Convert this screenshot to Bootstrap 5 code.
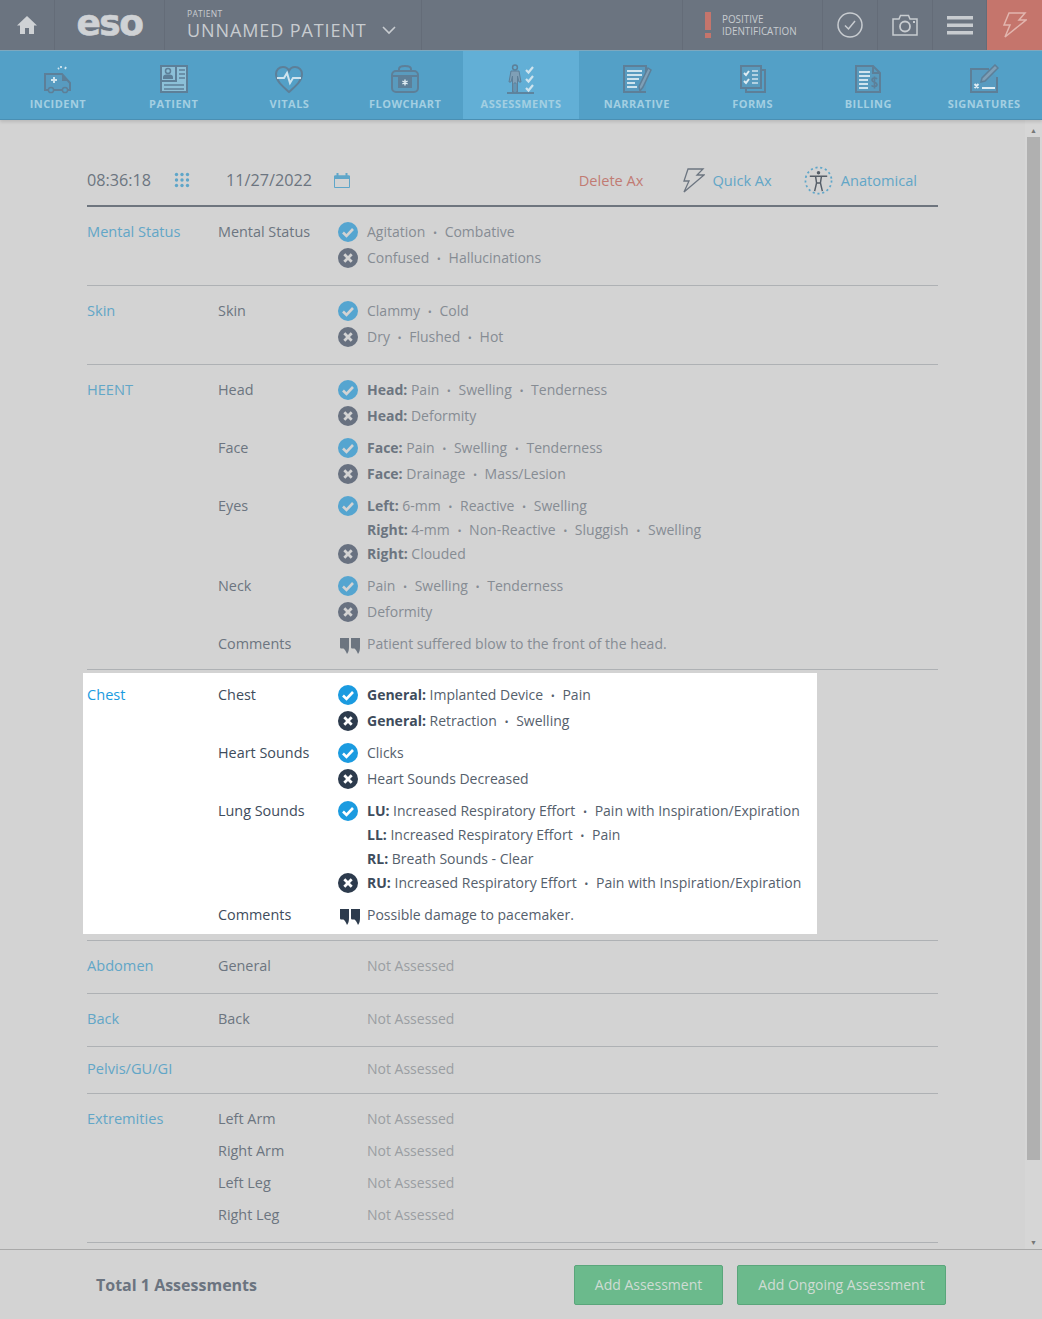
<!DOCTYPE html>
<html lang="en"><head><meta charset="utf-8"><title>Assessments</title>
<link href="https://cdn.jsdelivr.net/npm/bootstrap@5.3.0/dist/css/bootstrap.min.css" rel="stylesheet">
<style>
html,body{height:100%;overflow:hidden}
body{font-family:"Open Sans","Noto Sans",sans-serif;background:#d3d3d3;color:#6c7580;font-size:14px}
.app{height:1319px}
.topbar{height:51px;background:#6b7480;border-bottom:1px solid #7fa9bf;color:#c8ccd0;flex:none}
.tb-cell{border-right:1px solid #646c78;height:50px}
.tb-home{width:55px}.tb-logo{width:110px}
.logo-txt{font:700 36px/1 "DejaVu Sans",sans-serif;letter-spacing:-1.5px;color:#cfd2d5;margin-top:-4px;-webkit-text-stroke:.6px #cfd2d5}
.tb-patient{width:257px;padding-left:22px}
.pt-small{font-size:8.5px;line-height:10px;letter-spacing:.3px;margin-top:9px}
.pt-name{font-size:18px;line-height:22px;letter-spacing:.9px}
.chev{margin-left:15px}
.tb-spring{border-right:1px solid #646c78}
.tb-pos{width:140px;padding-left:22px}
.pos-txt{font-size:9.900px;line-height:12px;margin-left:11px}
.tb-ic{width:55px}
.tb-ic-n{width:54px}
.tb-flash{width:55px;background:#c5756c;border-right:0}
.mainnav{height:69px;background:#53a0c7;border-bottom:1px solid #4a8fb3;flex:none;box-shadow:0 2px 3px rgba(0,0,0,.12);position:relative;z-index:2}
.nav-it{width:115.8px;color:#a3cfe2;font-size:11px;font-weight:700;letter-spacing:.45px;padding-top:13px;line-height:15px}
.nav-it svg{display:block;margin-bottom:2px}
.nav-on{background:#62afd6}
.mid{min-height:0}
.scroller{min-width:0;overflow:hidden;padding:46px 87px 0 87px}
.sbar{width:17px;flex:none;background:#d6d6d6;padding:4px 2px 0 2px}
.sb-arrow{height:13px;color:#777;font-size:7px;line-height:13px;text-align:center}
.sb-thumb{height:1023px;background:#b0b0b0}
.hdr{height:41px;border-bottom:2px solid #6e757e;padding-bottom:11px;font-size:16.200px;width:851px}
.hdr-time{width:87px}.hdr-date{margin-left:36px;margin-right:22px}
.hdr-link{color:#62a6c7;font-size:14.600px;margin-top:2px}
.hdr-del{color:#c17b73;font-size:14.600px;margin-top:2px;margin-left:auto;margin-right:40px}
.hdr-q{margin-left:7px;margin-right:32px}
.hdr-a{margin-left:8px;margin-right:21px}
.sect{width:851px;padding:13px 0;border-bottom:1px solid #aeb1b4}
.rows{display:flex;flex-direction:column;gap:6px}
.arow{display:flex}
.sect-name{width:131px;flex:none;color:#62a6c7;line-height:22px;font-size:14.600px}
.lab{width:120px;flex:none;line-height:24px;color:#6c7580;font-size:14.400px}
.grp{display:flex;min-height:26px}
.grp-ic{width:29px;flex:none;height:24px;display:flex;align-items:center}
.qmark{margin-left:2px;margin-top:4px}
.ln{line-height:24px;color:#868c93}
.ln b{font-weight:700;color:#6c7580}
.sep{margin:0 7.600px;font-size:11px;line-height:1}
.grp-c{min-height:24px}
.na{color:#9a9ea2;line-height:24px;min-height:26px;margin-left:29px}
.sect-chest{padding:0 0 6px 0}
.hilite{width:fit-content;background:#fff;margin:3px 0 0 -4px;padding:10px 16px 7px 4px}
.hilite .sect-name{color:#1b9be0}
.hilite .lab{color:#3e4c5c}
.hilite .ln{color:#55606c}
.hilite .ln b{color:#3e4c5c}
.sect-pelvis{padding:10px 0}
.foot{height:70px;flex:none;border-top:1px solid #a9a9a9;padding:15px 96px 0 96px;background:#d3d3d3}
.foot-total{font-size:16px;font-weight:700;color:#6b7480}
.foot-btn{height:40px;background:#6bba8c;border:1px solid #5aa67b;color:#cfdcd4;font-size:14px;padding:0 0 2px;border-radius:2px;--bs-btn-hover-bg:#6bba8c;width:149px}
.foot-btn2{margin-left:14px;width:209px}
.oki{color:#55a5d0;--ic:#d3d3d3}.noi{color:#687180;--ic:#d3d3d3}.qti{color:#6c7580}
.okw{color:#1b9be0;--ic:#fff}.now{color:#2d3b4d;--ic:#fff}.qtw{color:#2d3b4d}
</style></head><body>
<svg width="0" height="0" class="position-absolute">
<symbol id="ok" viewBox="0 0 20 20"><circle cx="10" cy="10" r="10" fill="currentColor"/><path d="M5 10.500l3.500 3.500L15 7" fill="none" stroke="var(--ic,#d3d3d3)" stroke-width="2.600"/></symbol>
<symbol id="no" viewBox="0 0 20 20"><circle cx="10" cy="10" r="10" fill="currentColor"/><path d="M6.300 6.300l7.400 7.400M13.700 6.300l-7.400 7.400" fill="none" stroke="var(--ic,#d3d3d3)" stroke-width="2.800"/></symbol>
<symbol id="qt" viewBox="0 0 20 16"><path d="M0 0h9v9c0 3-.5 5-2 7-1-2.500-2-4.500-3.500-5.500h-2C.5 10.500 0 10 0 9zM11 0h9v9c0 3-.5 5-2 7-1-2.500-2-4.500-3.500-5.500h-2c-1 0-1.500-.5-1.500-1.500z" fill="currentColor"/></symbol>
</svg>
<div class="app d-flex flex-column">
 <header class="topbar d-flex">
  <div class="tb-cell tb-home d-flex align-items-center justify-content-center">
   <svg width="22" height="20" viewBox="0 0 22 20"><path d="M11 1L1 10.500h3V19h5v-6h4v6h5v-8.500h3z" fill="#cfd2d5"/></svg></div>
  <div class="tb-cell tb-logo d-flex align-items-center justify-content-center"><span class="logo-txt">eso</span></div>
  <div class="tb-cell tb-patient"><div class="pt-small">PATIENT</div>
   <div class="pt-name d-flex align-items-center">UNNAMED PATIENT
   <svg class="chev" width="14" height="9" viewBox="0 0 14 9"><path d="M1 1l6 6 6-6" fill="none" stroke="#c8ccd0" stroke-width="1.600"/></svg></div></div>
  <div class="tb-cell tb-spring flex-grow-1"></div>
  <div class="tb-cell tb-pos d-flex align-items-center">
   <svg width="6" height="26" viewBox="0 0 6 26"><path d="M0 0h6v18H0zM0 21h6v5H0z" fill="#c5756c"/></svg>
   <div class="pos-txt">POSITIVE<br>IDENTIFICATION</div></div>
  <div class="tb-cell tb-ic d-flex align-items-center justify-content-center">
   <svg width="26" height="26" viewBox="0 0 26 26"><circle cx="13" cy="13" r="12" fill="none" stroke="#c8ccd0" stroke-width="1.500"/><path d="M8 13.500l3.500 3.500L18 9" fill="none" stroke="#c8ccd0" stroke-width="1.500"/></svg></div>
  <div class="tb-cell tb-ic d-flex align-items-center justify-content-center">
   <svg width="26" height="22" viewBox="0 0 26 22"><path d="M1 5h6l1.500-3.500h8L18 5h7v16H1z" fill="none" stroke="#c8ccd0" stroke-width="1.500"/><circle cx="13" cy="12.500" r="5" fill="none" stroke="#c8ccd0" stroke-width="1.800"/><rect x="21" y="7" width="2" height="2" fill="#c8ccd0"/></svg></div>
  <div class="tb-cell tb-ic-n d-flex align-items-center justify-content-center">
   <svg width="26" height="19" viewBox="0 0 26 19"><path d="M0 0h26v3.500H0zM0 7.500h26V11H0zM0 15h26v3.500H0z" fill="#c8ccd0"/></svg></div>
  <div class="tb-cell tb-flash d-flex align-items-center justify-content-center">
   <svg width="24" height="26" viewBox="0 0 24 26"><path d="M6 1h16l-6 7h7L2 25l5-12H1z" fill="none" stroke="#e2b5ae" stroke-width="1.500"/></svg></div>
 </header>
 <nav class="mainnav d-flex">
  <div class="nav-it d-flex flex-column align-items-center"><svg width="30" height="30" viewBox="0 0 30 30"><path d="M2 10h17l8 9v7H2z" fill="#6592b0" fill-opacity=".3" stroke="#5d7f98" stroke-width="2"/><path d="M19 17v-6l6 6z" fill="#5d7f98"/><circle cx="8" cy="26" r="2.600" fill="#53a0c7" stroke="#5d7f98" stroke-width="1.500"/><circle cx="22" cy="26" r="2.600" fill="#53a0c7" stroke="#5d7f98" stroke-width="1.500"/><path d="M11 13v6M8 16h6" stroke="#cfe4ee" stroke-width="2"/><path d="M15 5l1-1M18 4l0-2M22 5l1-2" stroke="#cfe4ee" stroke-width="1.800"/></svg>INCIDENT</div>
  <div class="nav-it d-flex flex-column align-items-center"><svg width="30" height="30" viewBox="0 0 30 30"><rect x="2" y="2" width="26" height="26" fill="#8cc0d8" stroke="#5d7f98" stroke-width="2"/><circle cx="9" cy="7" r="2.500" fill="none" stroke="#5d7f98" stroke-width="1.500"/><path d="M4 15v-2c0-2 2-2.500 5-2.500s5 .5 5 2.500v2z" fill="#5d7f98"/><path d="M3 16h13V3h2v15H3z" fill="#5d7f98"/><path d="M20 6h6M20 10h6M20 14h6M5 21h20M5 25h20" stroke="#5d7f98" stroke-width="1.500"/></svg>PATIENT</div>
  <div class="nav-it d-flex flex-column align-items-center"><svg width="30" height="30" viewBox="0 0 30 30"><path d="M15 28C8 22 2 17 2 10c0-4 3-7 7-7 3 0 5 1.500 6 4 1-2.500 3-4 6-4 4 0 7 3 7 7 0 7-6 12-13 18z" fill="none" stroke="#5d7f98" stroke-width="2"/><path d="M3 14h7l3-5 3 10 3-5h8" fill="none" stroke="#cfe4ee" stroke-width="2"/></svg>VITALS</div>
  <div class="nav-it d-flex flex-column align-items-center"><svg width="30" height="30" viewBox="0 0 30 30"><path d="M9 7V5c0-2 2-3 6-3s6 1 6 3v2" fill="none" stroke="#5d7f98" stroke-width="2"/><rect x="2" y="7" width="26" height="21" rx="4" fill="#6592b0" fill-opacity=".35" stroke="#5d7f98" stroke-width="2"/><path d="M2 12h26" stroke="#5d7f98" stroke-width="2"/><rect x="8" y="13" width="14" height="11" fill="#5d7f98"/><path d="M15 15.500v6M12.400 17l5.200 3M17.600 17l-5.200 3" stroke="#e0edf3" stroke-width="1.400"/></svg>FLOWCHART</div>
  <div class="nav-it nav-on d-flex flex-column align-items-center"><svg width="30" height="30" viewBox="0 0 30 30"><circle cx="9" cy="3.500" r="2.400" fill="none" stroke="#5d7f98" stroke-width="1.500"/><path d="M5 7h8l2 11h-2l-1.500-6v16H10v-9H8v9H6.500V12L5 18H3z" fill="#7f9fb6" stroke="#5d7f98"/><path d="M1 29h27" stroke="#5d7f98" stroke-width="1.800"/><path d="M20 6l2.500 2.500L27 3M20 15l2.500 2.500L27 12M20 24l2.500 2.500L27 21" fill="none" stroke="#cfe4ee" stroke-width="2.200"/></svg>ASSESSMENTS</div>
  <div class="nav-it d-flex flex-column align-items-center"><svg width="30" height="30" viewBox="0 0 30 30"><path d="M24 12V2H2v26h22" fill="#6592b0" fill-opacity=".3" stroke="#5d7f98" stroke-width="2"/><path d="M5 7h15M5 11h15M5 15h12M5 19h8M5 23h10" stroke="#cfe4ee" stroke-width="1.800"/><path d="M26 4l3 2-8 17-3 4-1-4.500z" fill="#7f9fb6" stroke="#5d7f98" stroke-width="1.500"/></svg>NARRATIVE</div>
  <div class="nav-it d-flex flex-column align-items-center"><svg width="30" height="30" viewBox="0 0 30 30"><path d="M24 6h3v22H8v-4" fill="none" stroke="#5d7f98" stroke-width="2"/><rect x="3" y="2" width="20" height="22" fill="#6592b0" fill-opacity=".35" stroke="#5d7f98" stroke-width="2"/><path d="M6 9l2 2 3-4M6 17l2 2 3-4" fill="none" stroke="#e0edf3" stroke-width="2"/><path d="M14 7h6M14 11h6M14 15h6M14 19h6" stroke="#cfe4ee" stroke-width="1.600"/></svg>FORMS</div>
  <div class="nav-it d-flex flex-column align-items-center"><svg width="30" height="30" viewBox="0 0 30 30"><path d="M3 2h17l7 7v19H3z" fill="#6592b0" fill-opacity=".35" stroke="#5d7f98" stroke-width="2"/><path d="M20 2v7h7" fill="none" stroke="#5d7f98" stroke-width="2"/><path d="M6 8h11M6 12h11M6 16h9M6 20h9M6 24h9" stroke="#cfe4ee" stroke-width="1.800"/><path d="M24 15c-1-1.500-5-1.500-5 1 0 3 5 1.500 5 4.500 0 2.500-4 2.500-5.500 1M21.500 12.500v12" fill="none" stroke="#5d7f98" stroke-width="1.600"/></svg>BILLING</div>
  <div class="nav-it d-flex flex-column align-items-center"><svg width="30" height="30" viewBox="0 0 30 30"><path d="M20 5H2v23h26V13" fill="#6592b0" fill-opacity=".3" stroke="#5d7f98" stroke-width="2"/><path d="M26 1l3 3-13 13-4 1 1-4z" fill="#7f9fb6" stroke="#5d7f98" stroke-width="1.500"/><path d="M5.500 20l4 4M9.500 20l-4 4M13 24h13" stroke="#e0edf3" stroke-width="2"/></svg>SIGNATURES</div>
 </nav>
 <div class="mid d-flex flex-grow-1">
  <main class="scroller flex-grow-1">
   <div class="hdr d-flex align-items-center">
    <span class="hdr-time">08:36:18</span>
    <svg width="16" height="16" viewBox="0 0 16 16" fill="#5fa6c9"><circle cx="2.500" cy="2.500" r="1.700"/><circle cx="8" cy="2.500" r="1.700"/><circle cx="13.500" cy="2.500" r="1.700"/><circle cx="2.500" cy="8" r="1.700"/><circle cx="8" cy="8" r="1.700"/><circle cx="13.500" cy="8" r="1.700"/><circle cx="2.500" cy="13.500" r="1.700"/><circle cx="8" cy="13.500" r="1.700"/><circle cx="13.500" cy="13.500" r="1.700"/></svg>
    <span class="hdr-date">11/27/2022</span>
    <svg width="16" height="15" viewBox="0 0 16 15"><path d="M.5 3h15v11.500H.5z" fill="none" stroke="#5fa6c9"/><path d="M.5 2.500h15V6H.5z" fill="#5fa6c9"/><path d="M3.500 0v3M12.500 0v3" stroke="#5fa6c9" stroke-width="2"/></svg>
    <span class="hdr-del">Delete Ax</span>
    <svg width="22" height="25" viewBox="0 0 22 25"><path d="M5 1h15l-6 6h7L1 24l5-11H1z" fill="none" stroke="#6c7580" stroke-width="1.300"/></svg>
    <span class="hdr-link hdr-q">Quick Ax</span>
    <svg width="29" height="29" viewBox="0 0 30 30"><circle cx="15" cy="15" r="13.500" fill="none" stroke="#5fa6c9" stroke-width="1.800" stroke-dasharray="2.200 2.800"/><circle cx="15" cy="7" r="1.800" fill="#555d67"/><path d="M6 10.500h18M12 11l1 6.500-2 8.500M18 11l-1 6.500 2 8.500M13 17.500h4" fill="none" stroke="#555d67" stroke-width="1.500"/></svg>
    <span class="hdr-link hdr-a">Anatomical</span>
   </div>
   <section class="sect"><div class="rows"><div class="arow"><div class="sect-name">Mental Status</div><div class="lab">Mental Status</div><div>
     <div class="grp"><div class="grp-ic"><svg width="20" height="20" class="oki"><use href="#ok"/></svg></div><div class="ln">Agitation<span class="sep">•</span>Combative</div></div>
     <div class="grp"><div class="grp-ic"><svg width="20" height="20" class="noi"><use href="#no"/></svg></div><div class="ln">Confused<span class="sep">•</span>Hallucinations</div></div>
   </div></div></div></section>
   <section class="sect"><div class="rows"><div class="arow"><div class="sect-name">Skin</div><div class="lab">Skin</div><div>
     <div class="grp"><div class="grp-ic"><svg width="20" height="20" class="oki"><use href="#ok"/></svg></div><div class="ln">Clammy<span class="sep">•</span>Cold</div></div>
     <div class="grp"><div class="grp-ic"><svg width="20" height="20" class="noi"><use href="#no"/></svg></div><div class="ln">Dry<span class="sep">•</span>Flushed<span class="sep">•</span>Hot</div></div>
   </div></div></div></section>
   <section class="sect"><div class="rows">
    <div class="arow"><div class="sect-name">HEENT</div><div class="lab">Head</div><div>
     <div class="grp"><div class="grp-ic"><svg width="20" height="20" class="oki"><use href="#ok"/></svg></div><div class="ln"><b>Head:</b> Pain<span class="sep">•</span>Swelling<span class="sep">•</span>Tenderness</div></div>
     <div class="grp"><div class="grp-ic"><svg width="20" height="20" class="noi"><use href="#no"/></svg></div><div class="ln"><b>Head:</b> Deformity</div></div></div></div>
    <div class="arow"><div class="sect-name"></div><div class="lab">Face</div><div>
     <div class="grp"><div class="grp-ic"><svg width="20" height="20" class="oki"><use href="#ok"/></svg></div><div class="ln"><b>Face:</b> Pain<span class="sep">•</span>Swelling<span class="sep">•</span>Tenderness</div></div>
     <div class="grp"><div class="grp-ic"><svg width="20" height="20" class="noi"><use href="#no"/></svg></div><div class="ln"><b>Face:</b> Drainage<span class="sep">•</span>Mass/Lesion</div></div></div></div>
    <div class="arow"><div class="sect-name"></div><div class="lab">Eyes</div><div>
     <div class="grp"><div class="grp-ic"><svg width="20" height="20" class="oki"><use href="#ok"/></svg></div><div><div class="ln"><b>Left:</b> 6-mm<span class="sep">•</span>Reactive<span class="sep">•</span>Swelling</div><div class="ln"><b>Right:</b> 4-mm<span class="sep">•</span>Non-Reactive<span class="sep">•</span>Sluggish<span class="sep">•</span>Swelling</div></div></div>
     <div class="grp"><div class="grp-ic"><svg width="20" height="20" class="noi"><use href="#no"/></svg></div><div class="ln"><b>Right:</b> Clouded</div></div></div></div>
    <div class="arow"><div class="sect-name"></div><div class="lab">Neck</div><div>
     <div class="grp"><div class="grp-ic"><svg width="20" height="20" class="oki"><use href="#ok"/></svg></div><div class="ln">Pain<span class="sep">•</span>Swelling<span class="sep">•</span>Tenderness</div></div>
     <div class="grp"><div class="grp-ic"><svg width="20" height="20" class="noi"><use href="#no"/></svg></div><div class="ln">Deformity</div></div></div></div>
    <div class="arow"><div class="sect-name"></div><div class="lab">Comments</div><div>
     <div class="grp grp-c"><div class="grp-ic"><svg width="20" height="16" class="qti qmark"><use href="#qt"/></svg></div><div class="ln">Patient suffered blow to the front of the head.</div></div></div></div>
   </div></section>
   <section class="sect sect-chest"><div class="hilite rows">
    <div class="arow"><div class="sect-name">Chest</div><div class="lab">Chest</div><div>
     <div class="grp"><div class="grp-ic"><svg width="20" height="20" class="okw"><use href="#ok"/></svg></div><div class="ln"><b>General:</b> Implanted Device<span class="sep">•</span>Pain</div></div>
     <div class="grp"><div class="grp-ic"><svg width="20" height="20" class="now"><use href="#no"/></svg></div><div class="ln"><b>General:</b> Retraction<span class="sep">•</span>Swelling</div></div></div></div>
    <div class="arow"><div class="sect-name"></div><div class="lab">Heart Sounds</div><div>
     <div class="grp"><div class="grp-ic"><svg width="20" height="20" class="okw"><use href="#ok"/></svg></div><div class="ln">Clicks</div></div>
     <div class="grp"><div class="grp-ic"><svg width="20" height="20" class="now"><use href="#no"/></svg></div><div class="ln">Heart Sounds Decreased</div></div></div></div>
    <div class="arow"><div class="sect-name"></div><div class="lab">Lung Sounds</div><div>
     <div class="grp"><div class="grp-ic"><svg width="20" height="20" class="okw"><use href="#ok"/></svg></div><div><div class="ln"><b>LU:</b> Increased Respiratory Effort<span class="sep">•</span>Pain with Inspiration/Expiration</div><div class="ln"><b>LL:</b> Increased Respiratory Effort<span class="sep">•</span>Pain</div><div class="ln"><b>RL:</b> Breath Sounds - Clear</div></div></div>
     <div class="grp"><div class="grp-ic"><svg width="20" height="20" class="now"><use href="#no"/></svg></div><div class="ln"><b>RU:</b> Increased Respiratory Effort<span class="sep">•</span>Pain with Inspiration/Expiration</div></div></div></div>
    <div class="arow"><div class="sect-name"></div><div class="lab">Comments</div><div>
     <div class="grp grp-c"><div class="grp-ic"><svg width="20" height="16" class="qtw qmark"><use href="#qt"/></svg></div><div class="ln">Possible damage to pacemaker.</div></div></div></div>
   </div></section>
   <section class="sect"><div class="arow"><div class="sect-name">Abdomen</div><div class="lab">General</div><div class="na">Not Assessed</div></div></section>
   <section class="sect"><div class="arow"><div class="sect-name">Back</div><div class="lab">Back</div><div class="na">Not Assessed</div></div></section>
   <section class="sect sect-pelvis"><div class="arow"><div class="sect-name">Pelvis/GU/GI</div><div class="lab"></div><div class="na">Not Assessed</div></div></section>
   <section class="sect"><div class="rows">
    <div class="arow"><div class="sect-name">Extremities</div><div class="lab">Left Arm</div><div class="na">Not Assessed</div></div>
    <div class="arow"><div class="sect-name"></div><div class="lab">Right Arm</div><div class="na">Not Assessed</div></div>
    <div class="arow"><div class="sect-name"></div><div class="lab">Left Leg</div><div class="na">Not Assessed</div></div>
    <div class="arow"><div class="sect-name"></div><div class="lab">Right Leg</div><div class="na">Not Assessed</div></div>
   </div></section>
  </main>
  <aside class="sbar d-flex flex-column">
   <div class="sb-arrow">▲</div><div class="sb-thumb"></div><div class="flex-grow-1"></div><div class="sb-arrow">▼</div>
  </aside>
 </div>
 <footer class="foot d-flex align-items-start">
  <div class="foot-total mt-2">Total 1 Assessments</div>
  <button class="btn foot-btn ms-auto" type="button">Add Assessment</button>
  <button class="btn foot-btn foot-btn2" type="button">Add Ongoing Assessment</button>
 </footer>
</div>
<script src="https://cdn.jsdelivr.net/npm/bootstrap@5.3.0/dist/js/bootstrap.bundle.min.js"></script>
</body></html>
